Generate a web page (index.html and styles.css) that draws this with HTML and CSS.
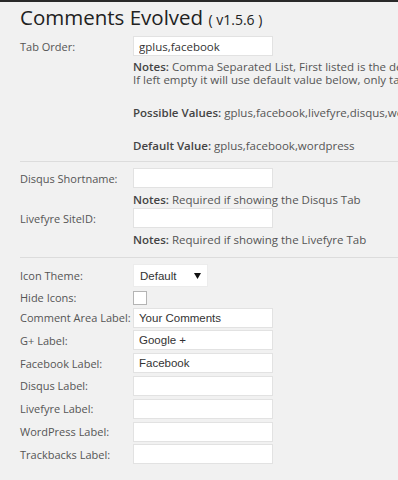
FILE: index.html
```html
<!DOCTYPE html>
<html lang="en">
<head>
    <meta charset="UTF-8">
    <title>Comments Evolved Settings</title>
    <link rel="stylesheet" href="styles.css">
</head>
<body>
    <div class="top-bar"></div>

    <div class="wrap">
        <h2 class="page-title">Comments Evolved <span class="version">( v1.5.6 )</span></h2>

        <!-- Tab order -->
        <div class="section section-tabs">
            <div class="row">
                <label class="row-label" for="tab_order">Tab Order:</label>
                <input class="text-input input-sans" id="tab_order" type="text" value="gplus,facebook">
            </div>
            <div class="notes">
                <p><b>Notes:</b> Comma Separated List, First listed is the default tab.</p>
                <p>If left empty it will use default value below, only tabs listed will be shown.</p>
                <p class="spaced"><b>Possible Values:</b> gplus,facebook,livefyre,disqus,wordpress,trackbacks</p>
                <p class="spaced spaced-last"><b>Default Value:</b> gplus,facebook,wordpress</p>
            </div>
        </div>

        <!-- Service ids -->
        <div class="section section-ids">
            <div class="row">
                <label class="row-label" for="disqus_shortname">Disqus Shortname:</label>
                <input class="text-input" id="disqus_shortname" type="text">
            </div>
            <div class="notes notes-short">
                <p><b>Notes:</b> Required if showing the Disqus Tab</p>
            </div>
            <div class="row">
                <label class="row-label" for="livefyre_siteid">Livefyre SiteID:</label>
                <input class="text-input" id="livefyre_siteid" type="text">
            </div>
            <div class="notes notes-short">
                <p><b>Notes:</b> Required if showing the Livefyre Tab</p>
            </div>
        </div>

        <!-- Labels and icons -->
        <div class="section section-labels">
            <div class="row row-select">
                <label class="row-label" for="icon_theme">Icon Theme:</label>
                <div class="select-wrap">
                    <select class="select" id="icon_theme">
                        <option>Default</option>
                    </select>
                    <svg class="select-arrow" width="7" height="6" viewBox="0 0 7 6"><path d="M0 0H7L3.5 6Z" fill="#111"/></svg>
                </div>
            </div>
            <div class="row row-check">
                <label class="row-label" for="hide_icons">Hide Icons:</label>
                <input class="checkbox" id="hide_icons" type="checkbox">
            </div>
            <div class="row">
                <label class="row-label" for="label_comments">Comment Area Label:</label>
                <input class="text-input" id="label_comments" type="text" value="Your Comments">
            </div>
            <div class="row">
                <label class="row-label" for="label_gplus">G+ Label:</label>
                <input class="text-input" id="label_gplus" type="text" value="Google +">
            </div>
            <div class="row">
                <label class="row-label" for="label_facebook">Facebook Label:</label>
                <input class="text-input" id="label_facebook" type="text" value="Facebook">
            </div>
            <div class="row">
                <label class="row-label" for="label_disqus">Disqus Label:</label>
                <input class="text-input" id="label_disqus" type="text">
            </div>
            <div class="row">
                <label class="row-label" for="label_livefyre">Livefyre Label:</label>
                <input class="text-input" id="label_livefyre" type="text">
            </div>
            <div class="row">
                <label class="row-label" for="label_wordpress">WordPress Label:</label>
                <input class="text-input" id="label_wordpress" type="text">
            </div>
            <div class="row">
                <label class="row-label" for="label_trackbacks">Trackbacks Label:</label>
                <input class="text-input" id="label_trackbacks" type="text">
            </div>
        </div>
    </div>
</body>
</html>
```

FILE: styles.css
```css
body {
    margin: 0;
    background-color: #f1f1f1;
    font-family: "Open Sans", "DejaVu Sans", sans-serif;
    color: #555;
    overflow: hidden;
}
.top-bar {
    height: 2px;
    background-color: #2a2a2a;
}
.wrap {
    padding-left: 20px;
}
.page-title {
    margin: 1px 0 2px;
    font-size: 20.5px;
    line-height: 28px;
    font-weight: normal;
    color: #222;
    white-space: nowrap;
}
.version {
    font-size: 14px;
}
.section {
    border-bottom: 1px solid #dcdcdc;
}
.section-tabs {
    padding-bottom: 9px;
}
.section-ids {
    padding-top: 6px;
    padding-bottom: 9px;
}
.section-labels {
    border-bottom: none;
    padding-top: 6px;
    display: flex;
    flex-direction: column;
    gap: 2.8px;
}
.row {
    display: flex;
    align-items: center;
    font-size: 11px;
}
.row-label {
    width: 113px;
    flex: none;
    white-space: nowrap;
}
.text-input {
    box-sizing: border-box;
    width: 140px;
    height: 20px;
    margin: 0;
    padding: 0 5px;
    border: 1px solid #e2e2e2;
    background-color: #fff;
    font-family: "Liberation Sans", Arial, sans-serif;
    font-size: 11.5px;
    color: #333;
    outline: none;
}
.input-sans {
    font-family: "Open Sans", "DejaVu Sans", sans-serif;
    font-size: 11.5px;
}
.notes {
    margin-left: 113px;
    padding-top: 4px;
    font-size: 11.5px;
    line-height: 13px;
    white-space: nowrap;
}
.notes p {
    margin: 0;
}
.notes b {
    color: #444;
    font-weight: 600;
}
.notes .spaced {
    margin-top: 19.5px;
}
.notes .spaced-last {
    margin-top: 20.5px;
}
.notes-short {
    padding-top: 5px;
    padding-bottom: 2px;
}
.row-select {
    height: 23px;
}
.select-wrap {
    position: relative;
    width: 75px;
    height: 23px;
}
.select {
    appearance: none;
    -webkit-appearance: none;
    box-sizing: border-box;
    width: 75px;
    height: 23px;
    margin: 0;
    padding: 0 6px;
    border: 1px solid #ececec;
    background-color: #fff;
    font-family: "Liberation Sans", Arial, sans-serif;
    font-size: 11.5px;
    color: #333;
    outline: none;
}
.select-arrow {
    position: absolute;
    right: 7px;
    top: 9px;
}
.row-check {
    height: 14px;
    margin-top: 1px;
}
.checkbox {
    appearance: none;
    -webkit-appearance: none;
    box-sizing: border-box;
    width: 14px;
    height: 14px;
    margin: 0;
    border: 1px solid #b4b4b4;
    background-color: #fff;
}
```
